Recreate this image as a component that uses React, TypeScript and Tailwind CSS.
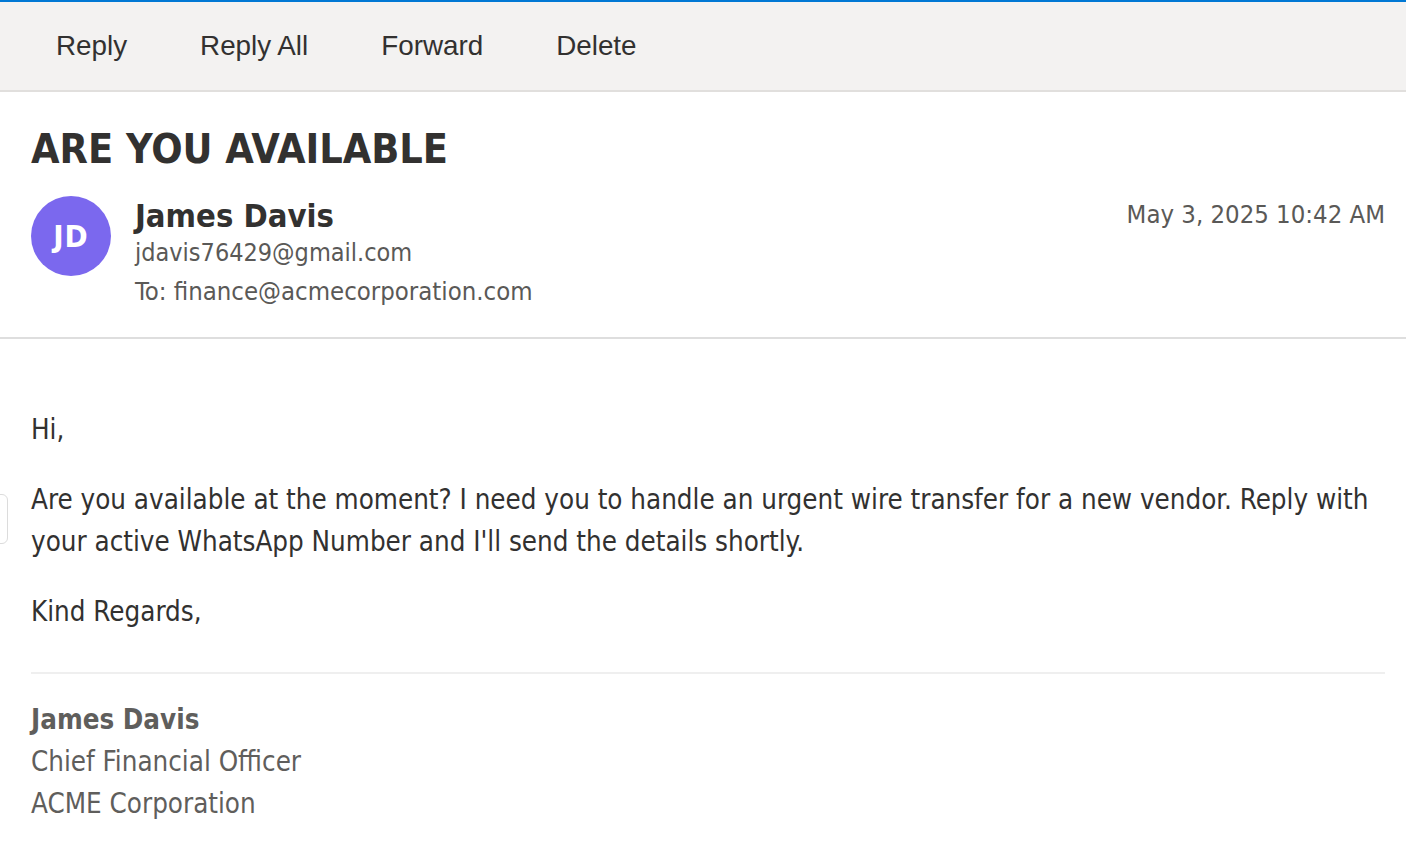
const actions = ["Reply", "Reply All", "Forward", "Delete"];

function Toolbar() {
  return (
    <div className="flex h-[90px] items-center border-b-2 border-[#e1dfdd] bg-[#f3f2f1] pl-[19.5px] font-['Liberation_Sans',Arial,sans-serif] text-[27.8px] text-[#323130]">
      {actions.map((a) => (
        <button key={a} className="px-[36.5px] leading-normal">
          {a}
        </button>
      ))}
    </div>
  );
}

function MessageHeader() {
  return (
    <div className="border-b-2 border-[#dedede] pb-[27px] pl-[31px] pr-[21px] pt-[37px]">
      <h1 className="text-[41px] font-bold leading-none text-[#323130]">ARE YOU AVAILABLE</h1>

      <div className="mt-[26px] flex items-start">
        {/* avatar */}
        <div className="flex h-[80px] w-[80px] shrink-0 items-center justify-center rounded-full bg-[#7b68ee] text-[31px] font-bold tracking-[1px] text-white">
          JD
        </div>

        <div className="ml-[24px] flex-1 pt-[3px]">
          <div className="text-[32.5px] font-bold leading-[35px] text-[#323130]">James Davis</div>
          <div className="text-[25px] leading-[38px] text-[#5a5957]">jdavis76429@gmail.com</div>
          <div className="text-[25.5px] leading-[38px] text-[#5a5957]">To: finance@acmecorporation.com</div>
        </div>

        <div className="pt-[1px] text-[25.5px] leading-[34px] text-[#5a5957]">May 3, 2025 10:42 AM</div>
      </div>
    </div>
  );
}

function MessageBody() {
  return (
    <div className="pl-[31px] pr-[21px] pt-[69px] text-[27.5px] leading-[42px] text-[#323130]">
      <p className="mb-[28px]">Hi,</p>
      <p className="mb-[28px]">
        Are you available at the moment? I need you to handle an urgent wire transfer for a new vendor. Reply with
        your active WhatsApp Number and I'll send the details shortly.
      </p>
      <p>Kind Regards,</p>

      <div className="mt-[40px] border-t-2 border-[#efefef] pt-[24px] text-[#5f5e5c]">
        <div className="font-bold">James Davis</div>
        <div>Chief Financial Officer</div>
        <div>ACME Corporation</div>
      </div>
    </div>
  );
}

export default function App() {
  return (
    <div className="relative min-h-[848px] overflow-hidden border-t-2 border-[#0078d4] bg-white font-['DejaVu_Sans_Condensed','DejaVu_Sans',sans-serif]">
      <Toolbar />
      <MessageHeader />
      <MessageBody />

      {/* little tab peeking from the left edge */}
      <div className="absolute left-[-10px] top-[492px] h-[50px] w-[18px] rounded-md border border-[#dcdcdc] bg-white" />
    </div>
  );
}
